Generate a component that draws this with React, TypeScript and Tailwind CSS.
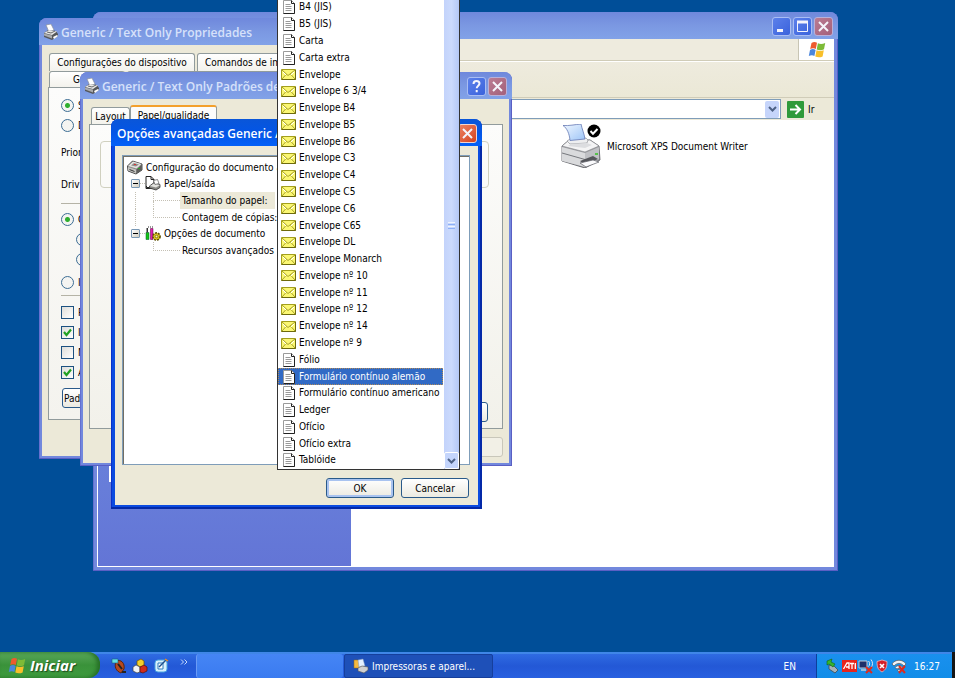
import { type FC, type ReactNode, useState } from "react"
import clsx from "clsx"

interface WindowProps {
  title?: string
  active?: boolean
  icon?: ReactNode
  controls?: ReactNode
  className?: string
  children: ReactNode
}

const SmallPrinter: FC<{ className?: string }> = ({ className = "h-4 w-4" }) => (
  <svg viewBox="0 0 16 16" className={clsx("shrink-0", className)} aria-hidden="true">
    <path d="M3 1l5-1 3 6-5 2z" fill="#fff" stroke="#8a8f9c" strokeWidth=".7" />
    <path d="M1 9l4-3 8 1 2 3v2l-6 4-8-3z" fill="#55575a" />
    <path d="M1 9l5-3 8 1.500-5 3.500z" fill="#e8e8e8" />
    <path d="M1 9.500l8 2v3l-8-3z" fill="#a9abae" />
    <path d="M4 8l4 1 4-2" stroke="#444" strokeWidth=".8" fill="none" />
    <path d="M10 13l4-2 1 1-4 3z" fill="#fff" />
  </svg>
)

const GreyPrinter: FC = () => (
  <svg viewBox="0 0 16 16" className="h-4 w-4 shrink-0" aria-hidden="true">
    <path d="M.5 7l5-5 9.500 3v6l-6 4-8-3z" fill="#8b8b88" stroke="#3c3c3c" strokeWidth=".9" />
    <path d="M1 7l5-4.500 8.500 2.500-5 4.500z" fill="#e4e4e0" />
    <path d="M4 6.500l3-2.500 5 1.500-3 2z" fill="#8f8f8c" />
    <path d="M1 8l8 2.500v4L1 11.500z" fill="#c4c4c0" />
    <path d="M2.500 10.500l5 2" stroke="#333" strokeWidth="1" />
    <path d="M9.500 10.500l5-4.500v5l-5 3.500z" fill="#5d5d5a" />
    <rect x="7" y="5" width="2" height="1" fill="#d33" />
    <rect x="11" y="9" width="2" height="1" fill="#2a2" />
  </svg>
)

const PaperTray: FC = () => (
  <svg viewBox="0 0 16 16" className="h-4 w-4 shrink-0" aria-hidden="true">
    <path d="M1 1.500h5l3 3v9H1z" fill="#fff" stroke="#222" />
    <path d="M6 1.500v3h3" fill="none" stroke="#222" />
    <path d="M4.500 11l4-3 6.500 1.500v3l-4 2.500-6.500-2z" fill="#8c8c88" stroke="#333" strokeWidth=".8" />
    <path d="M5 11l4-2.500L15 10l-4 2.500z" fill="#e2e2de" />
    <path d="M8.500 5.500l4-1 1.500 4-4 1z" fill="#fff" stroke="#555" strokeWidth=".7" />
    <path d="M4 12.500H1.500V11" stroke="#222" fill="none" />
  </svg>
)

const OptionsIcon: FC = () => (
  <svg viewBox="0 0 16 16" className="h-4 w-4 shrink-0" aria-hidden="true">
    <path d="M1 6.500h3v7H1z" fill="#14c414" stroke="#053" strokeWidth=".5" />
    <path d="M1.500 2h1.500v4.500H1.500z" fill="#333" />
    <path d="M5.500 2.500h2.500v11H5.500z" fill="#e01bb0" stroke="#503" strokeWidth=".5" />
    <path d="M3 1h5" stroke="#333" strokeDasharray="1 1" />
    <circle cx="11.500" cy="10.500" r="3.600" fill="#e0c81e" stroke="#5d5004" strokeWidth="1.600" strokeDasharray="2 1" />
    <circle cx="11.500" cy="10.500" r="1.300" fill="#fff6b0" stroke="#4d4203" strokeWidth=".6" />
  </svg>
)

const PageIcon: FC = () => (
  <svg viewBox="0 0 13 14" className="h-[14px] w-[13px] shrink-0" aria-hidden="true">
    <path d="M.5.5h8l3 3v10H.5z" fill="#fff" stroke="#9a9a9a" />
    <path d="M8.500.5v3h3v10H.5" fill="none" stroke="#222" />
    <path d="M2.500 4.500h5M2.500 6.500h6M2.500 8.500h6M2.500 10.500h6" stroke="#9a9a9a" />
  </svg>
)

const EnvelopeIcon: FC = () => (
  <svg viewBox="0 0 15 11" className="h-[11px] w-[15px] shrink-0" aria-hidden="true">
    <path d="M.5.5h14v10H.5z" fill="#fbf773" stroke="#a39f1d" />
    <path d="M1 1l6 5.500L14 1M1 10l4.500-5M14 10L9.500 5" fill="none" stroke="#a8a228" />
    <path d="M2 3l3 3M13 3l-3 3" stroke="#fff" />
    <path d="M.5 10.500h14V1" fill="none" stroke="#6e6a0c" />
  </svg>
)

const WindowsFlag: FC<{ className?: string }> = ({ className }) => (
  <svg viewBox="0 0 18 17" className={className} aria-hidden="true">
    <path d="M3.500 2C5.500.6 7.500.8 9 1.800L7.800 8C6 7 4.200 7 2.200 8z" fill="#ee5b2e" />
    <path d="M9.900 2.200c2 1 4.500 1 7.300-.2L16 8.200c-2.300 1.200-5 1.200-7.300.2z" fill="#7dbb37" />
    <path d="M2 8.900c2-1.100 4-1 5.600 0L6.400 15c-1.600-1-3.500-1-5.600 0z" fill="#4b86dd" />
    <path d="M8.500 9.300c2.200 1 4.800 1 7.300 0l-1.200 6.100c-2.300 1.200-5 1.200-7.300.1z" fill="#f8bf2a" />
  </svg>
)

const BigPrinter: FC = () => (
  <svg viewBox="0 0 42 44" className="h-[44px] w-[42px] shrink-0" aria-hidden="true">
    <defs>
      <linearGradient id="sheet" x1="0" y1="0" x2="1" y2="1">
        <stop offset="0" stopColor="#f2f8ff" />
        <stop offset="1" stopColor="#9cc4f7" />
      </linearGradient>
    </defs>
    <path d="M2 22l6-5 22-1 9 6 1 14-15 8L2 37z" fill="#9a9b9f" stroke="#55575d" strokeWidth=".8" />
    <path d="M2 22l6-5 22-1 9 6-14 6z" fill="#f4f4f5" stroke="#85878c" strokeWidth=".6" />
    <path d="M7 17l3-2 16-1 2 2-1 3-17 1z" fill="#eeeff1" stroke="#85878c" strokeWidth=".6" />
    <path d="M3 1.500c6 .5 12-1 18-1.500 1 5 3 9 4 15L10 16.500C9.500 10 7 4 3 1.500z" fill="url(#sheet)" stroke="#6478b4" strokeWidth=".8" />
    <path d="M8 22l3-2 16-1 5 2-7 3z" fill="#dcdde0" />
    <path d="M2 23l23 6v14L2 37z" fill="#d9dadc" />
    <path d="M2 29l23 6.500 14-7" stroke="#77797e" fill="none" strokeWidth="1" />
    <path d="M25 29l14-6v12l-14 8z" fill="#c3c4c8" fillOpacity=".9" />
    <path d="M20 37l13-5 5 3-13 6z" fill="#55565b" />
    <path d="M20 39l13-3 6 2-13 5z" fill="#fbfbfd" stroke="#606268" strokeWidth=".7" />
    <rect x="35" y="29" width="3" height="2" fill="#55c24a" />
    <circle cx="34" cy="7" r="6.500" fill="#000" />
    <path d="M30.500 7l2.500 2.800L37.500 5" stroke="#fff" strokeWidth="2" fill="none" />
  </svg>
)

const TitleButton: FC<{ label: string; tone: "blue" | "dim" | "red"; children: ReactNode }> = ({
  label,
  tone,
  children,
}) => (
  <button
    type="button"
    aria-label={label}
    className={clsx(
      "flex h-[19px] w-[19px] items-center justify-center rounded-[3px] border",
      tone === "blue" && "border-[#a9bdf3] bg-linear-to-br from-[#5c80ea] to-[#3a62dc]",
      tone === "dim" && "border-[#b9b0d8] bg-linear-to-br from-[#bb7c93] to-[#a3607a]",
      tone === "red" && "border-[#f3d5cf] bg-linear-to-br from-[#ec8263] to-[#d3401b]",
    )}
  >
    <svg viewBox="0 0 17 17" className="h-[17px] w-[17px]" fill="none" stroke="#f4f4fb" strokeWidth="2">
      {children}
    </svg>
  </button>
)

const cross = <path d="M4 4l9 9M13 4l-9 9" />
const question = (
  <path d="M5.500 6c0-2 1.200-3 3-3s3 1 3 2.600c0 2-2.800 2.200-2.800 4.700M8.700 12v2.200" />
)

const DesktopWindow: FC<WindowProps> = ({ title, active, icon, controls, className, children }) => (
  <section
    aria-label={title}
    className={clsx(
      "absolute flex flex-col rounded-t-lg",
      active || !title ? "px-1 pb-1" : "px-[3px] pb-[3px]",
      active
        ? "bg-[#0b4be0] shadow-[inset_-2px_-2px_0_#0429a8,inset_1px_0_0_#0a31c8]"
        : "bg-[#7288dd] shadow-[inset_-1px_-1px_0_#5a5fc4,inset_1px_0_0_#6570cf]",
      className,
    )}
  >
    <header
      className={clsx(
        "flex h-[27px] shrink-0 items-center rounded-t-lg pr-[5px] pl-1",
        active || !title ? "-mx-1" : "-mx-[3px]",
        active
          ? "bg-linear-to-b from-[#0a56d8] via-[#0355e6] to-[#0461f8]"
          : "bg-linear-to-b from-[#6f88dc] via-[#7b98e2] to-[#82a2e8]",
      )}
    >
      {icon}
      {title && (
        <h2
          className={clsx(
            "ml-[2px] grow pt-[3px] font-['Open_Sans',sans-serif] text-[12px] font-semibold whitespace-nowrap",
            active ? "text-white" : "text-[#d6e1fa]",
          )}
        >
          {title}
        </h2>
      )}
      <div className="ml-auto flex gap-[2px] pt-[2px]">{controls}</div>
    </header>
    {children}
  </section>
)

const Radio: FC<{ name: string; label: string; checked?: boolean; className?: string }> = ({
  name,
  label,
  checked,
  className,
}) => (
  <label className={clsx("flex h-[20px] items-center gap-1 whitespace-nowrap", className)}>
    <input
      type="radio"
      name={name}
      defaultChecked={checked}
      className="h-[13px] w-[13px] shrink-0 appearance-none rounded-full border border-[#3c6d94] bg-[#f4f4f1] checked:bg-[radial-gradient(circle,#2fae2f_0,#2fae2f_2px,#f4f4f1_3px)]"
    />
    {label}
  </label>
)

const Check: FC<{ label: string; checked?: boolean }> = ({ label, checked }) => (
  <label className="relative flex h-[20px] items-center gap-1 whitespace-nowrap">
    <input
      type="checkbox"
      defaultChecked={checked}
      className="peer h-[13px] w-[13px] shrink-0 appearance-none border border-[#1c5180] bg-linear-to-br from-[#dededa] to-white"
    />
    <svg viewBox="0 0 13 13" className="absolute left-0 hidden h-[13px] w-[13px] peer-checked:block">
      <path d="M3 6l2.500 3L10 3.500" fill="none" stroke="#21a121" strokeWidth="2.200" />
    </svg>
    {label}
  </label>
)

const PushButton: FC<{ children?: ReactNode; primary?: boolean; disabled?: boolean; label?: string; className?: string }> = ({
  children,
  primary,
  disabled,
  label,
  className,
}) => (
  <button
    type="button"
    aria-label={label}
    disabled={disabled}
    className={clsx(
      "h-[20px] rounded-[3px] border whitespace-nowrap",
      disabled ? "border-[#c9c7ba] bg-[#f2f0e6]" : "border-[#2a5a8a] bg-linear-to-b from-white to-[#eceae1]",
      primary && "shadow-[inset_0_0_0_2px_#a9c3f0]",
      className,
    )}
  >
    {children}
  </button>
)

const tabClass = "rounded-t-[3px] border border-b-0 border-[#919b9c] bg-linear-to-b from-white to-[#f3f2ec] whitespace-nowrap"

const PrinterProperties: FC = () => (
  <DesktopWindow
    title="Generic / Text Only Propriedades"
    icon={<SmallPrinter />}
    className="top-[18px] left-[39px] h-[441px] w-[416px]"
  >
    <div className="flex grow flex-col bg-[#ece9d8] px-[6px] pt-2 pb-[36px]">
      <div role="tablist" className="flex gap-[2px] pl-px">
        <button type="button" role="tab" className={clsx(tabClass, "h-[18px] w-[146px]")}>
          Configurações do dispositivo
        </button>
        <button type="button" role="tab" className={clsx(tabClass, "h-[18px] grow px-[7px] text-left")}>
          Comandos de im
        </button>
      </div>
      <div role="tablist" className="flex gap-[2px] pl-px">
        <button type="button" role="tab" className={clsx(tabClass, "h-[16px] w-[76px] pl-[23px] text-left leading-[14px]")}>
          G
        </button>
        <button type="button" role="tab" aria-label="Compartilhamento" className={clsx(tabClass, "h-[16px] grow")} />
      </div>
      <form className="flex grow flex-col items-start border border-[#919b9c] bg-linear-to-b from-[#fcfcfb] to-[#f4f3ee] px-3 pt-[7px]">
        <Radio name="hours" label="S" checked />
        <Radio name="hours" label="D" />
        <p className="mt-2 h-[20px] leading-[20px]">Prior</p>
        <p className="mt-3 h-[20px] leading-[20px]">Driv</p>
        <hr className="mt-2 mb-[5px] w-full border-[#b5b3a6]" />
        <Radio name="spool" label="C" checked />
        <Radio name="start" label="C" className="ml-[15px]" />
        <Radio name="start" label="C" className="ml-[15px]" />
        <Radio name="spool" label="I" className="mt-[3px]" />
        <hr className="mt-[3px] mb-[6px] w-full border-[#b5b3a6]" />
        <Check label="R" />
        <Check label="I" checked />
        <Check label="M" />
        <Check label="A" checked />
        <PushButton className="mt-[6px] ml-px pr-8 pl-px">Pad</PushButton>
      </form>
    </div>
  </DesktopWindow>
)

const PrintDefaults: FC = () => (
  <DesktopWindow
    title="Generic / Text Only Padrões de"
    icon={<SmallPrinter />}
    className="top-[72px] left-[80px] h-[394px] w-[432px]"
    controls={
      <>
        <TitleButton label="Ajuda" tone="blue">{question}</TitleButton>
        <TitleButton label="Fechar" tone="dim">{cross}</TitleButton>
      </>
    }
  >
    <div className="flex grow flex-col bg-[#ece9d8] px-[6px] pt-[6px] pb-[6px]">
      <div role="tablist" className="flex items-end">
        <button type="button" role="tab" className={clsx(tabClass, "ml-[2px] h-[17px] w-[39px]")}>
          Layout
        </button>
        <button
          type="button"
          role="tab"
          aria-selected="true"
          className="h-[19px] w-[87px] rounded-t-[3px] border-x border-t-2 border-x-[#919b9c] border-t-[#f3a02c] bg-[#fcfcfb] leading-[15px]"
        >
          Papel/qualidade
        </button>
      </div>
      <div className="flex grow flex-col border border-[#919b9c] bg-linear-to-b from-[#fcfcfb] to-[#f2f1ea] px-[10px] pt-4 pb-[6px]">
        <fieldset className="mr-[3px] h-[47px] rounded-[4px] border border-[#d0d0bf]" />
        <PushButton label="Avançado" className="mt-auto mr-1 w-[75px] self-end" />
      </div>
      <PushButton label="Aplicar" disabled className="mt-2 w-[75px] self-end" />
    </div>
  </DesktopWindow>
)

const TreeRow: FC<{ children: ReactNode }> = ({ children }) => (
  <li className="flex flex-1 items-center whitespace-nowrap">{children}</li>
)

const Branch: FC<{ icon: ReactNode; children: ReactNode }> = ({ icon, children }) => (
  <>
    <button
      type="button"
      aria-label="Recolher"
      className="ml-1 flex h-[9px] w-[9px] shrink-0 items-center justify-center rounded-[1px] border border-[#7898b5] bg-linear-to-br from-white to-[#d0ccbe]"
    >
      <span className="h-px w-[5px] bg-black" />
    </button>
    <span className="w-[5px] shrink-0 border-t border-dotted border-[#c4c0b4]" />
    {icon}
    <span className="ml-[3px]">{children}</span>
  </>
)

const Leaf: FC<{ children: ReactNode; selected?: boolean; last?: boolean; more?: boolean }> = ({
  children,
  selected,
  last,
  more,
}) => (
  <>
    <span
      className={clsx(
        "ml-2 w-[18px] shrink-0 self-stretch border-l border-dotted",
        last ? "border-transparent" : "border-[#c4c0b4]",
      )}
    />
    <span className="flex w-[27px] shrink-0 flex-col self-stretch">
      <span className="flex-1 border-b border-l border-dotted border-[#c4c0b4]" />
      <span className={clsx("flex-1 border-l border-dotted", more ? "border-[#c4c0b4]" : "border-transparent")} />
    </span>
    <span className={clsx("pr-2 pl-[2px] leading-[17px]", selected && "bg-[#ece9d8]")}>{children}</span>
  </>
)

const AdvancedOptions: FC = () => (
  <DesktopWindow
    title="Opções avançadas Generic /"
    active
    className="top-[119px] left-[111px] h-[390px] w-[371px]"
    controls={<TitleButton label="Fechar" tone="red">{cross}</TitleButton>}
  >
    <div className="flex grow flex-col bg-[#ece9d8] pt-[9px] pr-2 pb-[7px] pl-[7px]">
      <div className="grow border border-[#7f9db9] bg-white pt-[3px] pl-1 shadow-[inset_1px_1px_0_#716f64]">
        <ul className="flex h-[100px] flex-col">
          <TreeRow>
            <GreyPrinter />
            <span className="ml-[3px]">Configuração do documento a</span>
          </TreeRow>
          <TreeRow>
            <Branch icon={<PaperTray />}>Papel/saída</Branch>
          </TreeRow>
          <TreeRow>
            <Leaf selected more>Tamanho do papel:</Leaf>
          </TreeRow>
          <TreeRow>
            <Leaf>Contagem de cópias:</Leaf>
          </TreeRow>
          <TreeRow>
            <Branch icon={<OptionsIcon />}>Opções de documento</Branch>
          </TreeRow>
          <TreeRow>
            <Leaf last>Recursos avançados</Leaf>
          </TreeRow>
        </ul>
      </div>
      <div className="mt-[13px] mr-px flex justify-end gap-[7px]">
        <PushButton primary className="w-[68px]">OK</PushButton>
        <PushButton className="w-[68px]">Cancelar</PushButton>
      </div>
    </div>
  </DesktopWindow>
)

const papers = [
  "B4 (JIS)",
  "B5 (JIS)",
  "Carta",
  "Carta extra",
  "Envelope",
  "Envelope 6 3/4",
  "Envelope B4",
  "Envelope B5",
  "Envelope B6",
  "Envelope C3",
  "Envelope C4",
  "Envelope C5",
  "Envelope C6",
  "Envelope C65",
  "Envelope DL",
  "Envelope Monarch",
  "Envelope nº 10",
  "Envelope nº 11",
  "Envelope nº 12",
  "Envelope nº 14",
  "Envelope nº 9",
  "Fólio",
  "Formulário contínuo alemão",
  "Formulário contínuo americano",
  "Ledger",
  "Ofício",
  "Ofício extra",
  "Tablóide",
]

const PaperList: FC = () => {
  const [selected, setSelected] = useState("Formulário contínuo alemão")

  return (
    <div className="absolute -top-[2px] left-[277px] flex h-[472px] w-[183px] border border-[#333] bg-white">
      <ul role="listbox" aria-label="Tamanho do papel" className="flex grow flex-col">
        {papers.map((paper) => (
          <li
            key={paper}
            role="option"
            aria-selected={paper === selected}
            onClick={() => setSelected(paper)}
            className={clsx(
              "mr-px flex flex-1 items-center pl-[3px] leading-[16px] whitespace-nowrap",
              paper === selected && "bg-[#316ac5] text-white outline-1 -outline-offset-1 outline-dotted outline-[#b08a5a]",
            )}
          >
            <span className="flex w-[18px] shrink-0">
              {paper.startsWith("Envelope") ? <EnvelopeIcon /> : <span className="ml-[2px]"><PageIcon /></span>}
            </span>
            {paper}
          </li>
        ))}
      </ul>
      <div className="flex w-[15px] shrink-0 flex-col items-center justify-between bg-linear-to-r from-[#c3d3fb] via-[#cbdafd] to-[#b4c8f6]">
        <span />
        <div className="flex flex-col gap-px">
          <span className="h-px w-[7px] bg-[#eef4fe]" />
          <span className="h-px w-[7px] bg-[#8cb0f8]" />
          <span className="h-px w-[7px] bg-[#eef4fe]" />
          <span className="h-px w-[7px] bg-[#8cb0f8]" />
        </div>
        <button
          type="button"
          aria-label="Rolar para baixo"
          className="flex h-[17px] w-[15px] items-center justify-center rounded-[2px] border border-white bg-[#c4d5fc]"
        >
          <svg viewBox="0 0 9 6" className="h-[6px] w-[9px]">
            <path d="M1 1l3.500 3.500L8 1" fill="none" stroke="#4d6185" strokeWidth="2" />
          </svg>
        </button>
      </div>
    </div>
  )
}

const Explorer: FC = () => (
  <DesktopWindow
    className="top-[12px] left-[93px] h-[559px] w-[745px]"
    controls={
      <>
        <TitleButton label="Minimizar" tone="blue">
          <path d="M4 12.500h6" strokeWidth="3" />
        </TitleButton>
        <TitleButton label="Maximizar" tone="blue">
          <path d="M3.500 4v9.500h10V4" strokeWidth="1" />
          <path d="M3 4h11" strokeWidth="3" />
        </TitleButton>
        <TitleButton label="Fechar" tone="dim">{cross}</TitleButton>
      </>
    }
  >
    <div className="flex h-[22px] shrink-0 justify-end border-b border-[#d0ccb8] bg-[#eeebde]">
      <span className="flex w-[36px] items-center justify-center border-l border-[#c8c5b4] bg-white">
        <WindowsFlag className="h-[17px] w-[18px]" />
      </span>
    </div>
    <div className="h-[37px] shrink-0 border-t border-b border-t-white border-b-[#d0ccb8] bg-linear-to-b from-[#eeebde] to-[#ebe8d6]" />
    <div className="flex h-[22px] shrink-0 items-center bg-[#ece9d8]">
      <div className="flex h-[20px] grow items-center border border-[#7f9db9] bg-white pr-px">
        <input aria-label="Endereço" className="h-full min-w-0 grow bg-transparent px-1 outline-none" />
        <button
          type="button"
          aria-label="Mostrar endereços"
          className="flex h-[17px] w-[14px] items-center justify-center rounded-[2px] bg-[#c6d5fb]"
        >
          <svg viewBox="0 0 9 6" className="h-[6px] w-[9px]">
            <path d="M1 1l3.500 3.500L8 1" fill="none" stroke="#4d6185" strokeWidth="2" />
          </svg>
        </button>
      </div>
      <button type="button" className="flex w-[53px] items-center gap-1 pl-[6px]">
        <svg viewBox="0 0 17 17" className="h-[17px] w-[17px]">
          <rect width="17" height="17" rx="1" fill="#2f9a3a" />
          <path d="M3 8.500h10M8.500 4l4.500 4.500L8.500 13" fill="none" stroke="#fff" strokeWidth="2" />
        </svg>
        Ir
      </button>
    </div>
    <div className="flex grow border-b border-white">
      <aside className="w-[254px] shrink-0 border-l border-white bg-linear-to-b from-[#7ba2e7] to-[#6375d6] px-[11px]">
        <div className="h-[362px] bg-white" />
      </aside>
      <main className="grow bg-white pt-1 pl-[209px]">
        <a href="#printer" className="flex items-center gap-[5px]">
          <BigPrinter />
          Microsoft XPS Document Writer
        </a>
      </main>
    </div>
  </DesktopWindow>
)

const Taskbar: FC = () => (
  <footer className="relative flex h-[26px] shrink-0 items-stretch border-t-2 border-[#3f86e8] bg-linear-to-b from-[#2f6be2] via-[#2358d6] to-[#2860e0] text-white">
    <button
      type="button"
      className="-mt-[2px] flex w-[100px] items-center gap-1 rounded-r-xl bg-linear-to-b from-[#5aa85a] via-[#3a923a] to-[#3f9c3f] pl-2 font-['Open_Sans',sans-serif] text-[15px] font-bold italic shadow-[inset_-3px_0_4px_#256e25] text-shadow-[1px_1px_1px_#1d4d1d]"
    >
      <WindowsFlag className="h-[17px] w-[18px]" />
      Iniciar
    </button>
    <nav aria-label="Inicialização rápida" className="flex w-[95px] items-center gap-[5px] pl-[11px]">
      <a href="#tools" aria-label="Ferramentas">
        <svg viewBox="0 0 16 16" className="h-4 w-4">
          <path d="M5 3c5-2 9 2 8 8l-3 4C5 13 3 9 5 3z" fill="#b5491f" stroke="#5d230c" />
          <path d="M1 1h6v4H1z" fill="#62dfe6" stroke="#1d5a7c" strokeWidth=".6" />
          <path d="M7 6l4 5" stroke="#222" strokeWidth="2" />
          <path d="M11 13h4v2h-4z" fill="#222" />
        </svg>
      </a>
      <a href="#blocks" aria-label="Blocos">
        <svg viewBox="0 0 16 16" className="h-4 w-4">
          <path d="M5 3l4-2 3 2v5L8 9 5 7z" fill="#f2cf2d" stroke="#6c5206" strokeWidth=".7" />
          <path d="M1 9l3-2 4 2v5l-3 1-4-2z" fill="#f1f3f7" stroke="#444" strokeWidth=".7" />
          <path d="M8 9l4-2 3 2v4l-4 2-3-1z" fill="#cf2b1c" stroke="#561008" strokeWidth=".7" />
        </svg>
      </a>
      <a href="#desktop" aria-label="Mostrar área de trabalho">
        <svg viewBox="0 0 16 16" className="h-4 w-4">
          <rect x="2" y="2" width="12" height="12" rx="3" fill="#d8f0fc" stroke="#4aa4e0" />
          <path d="M5 5h5v6H5z" fill="#fff" stroke="#2b7bbd" />
          <path d="M6 9l7-7" stroke="#1e4f8c" strokeWidth="1.500" />
          <path d="M12 1l3 2" stroke="#eb8a22" strokeWidth="1.500" />
        </svg>
      </a>
      <svg viewBox="0 0 8 6" className="mb-[8px] ml-[6px] h-[6px] w-2 shrink-0" fill="none" stroke="#c5d8fb">
        <path d="M1 .5L3.500 3 1 5.500M4.500.5L7 3 4.500 5.500" />
      </svg>
    </nav>
    <div className="ml-px w-[147px] rounded-[3px] border-l border-[#6a9bf6] bg-linear-to-b from-[#4585f5] to-[#3a7bf0]" />
    <button
      type="button"
      className="ml-px flex w-[149px] items-center gap-[3px] rounded-[2px] border border-[#163f9c] bg-[#1e50b8] pl-2 whitespace-nowrap"
    >
      <svg viewBox="0 0 16 16" className="h-4 w-4 shrink-0">
        <path d="M1 2h4l1 1h4v7H1z" fill="#f4b942" stroke="#9b6b12" strokeWidth=".5" />
        <path d="M5 2l5-1 2 7-6 1z" fill="#e3f0ff" stroke="#7a94bf" strokeWidth=".5" />
        <path d="M5 10l4-2 6 1v3l-4 3-6-2z" fill="#d0d0d0" stroke="#555" strokeWidth=".6" />
      </svg>
      Impressoras e aparel...
    </button>
    <span className="ml-auto flex items-center pr-[20px]">EN</span>
    <div className="flex w-[136px] items-center border-l border-[#0d3f9c] bg-linear-to-b from-[#1990ee] to-[#128de8] pl-2">
      <svg viewBox="0 0 16 16" className="h-4 w-4 shrink-0">
        <path d="M4 7l5 1 4 4-3 3-6-4z" fill="#a9b2b8" stroke="#3e4a52" strokeWidth=".8" />
        <path d="M2 3l5-2-1 3 4 2-2 3-4-3-2 1z" fill="#35b52f" stroke="#13650f" strokeWidth=".6" />
      </svg>
      <svg viewBox="0 0 15 12" className="ml-px h-3 w-[15px] shrink-0">
        <rect width="15" height="12" fill="#e8241b" />
        <path d="M1.500 9l3.500-6h2v6M8 3.500h4M10 3.500V9M13.300 3v6M4 7h3" fill="none" stroke="#fff" strokeWidth="1.300" />
      </svg>
      <svg viewBox="0 0 16 16" className="ml-px h-4 w-4 shrink-0">
        <path d="M1 3h8v7H1z" fill="#1d2f6a" stroke="#c4ccd8" />
        <path d="M3 12h5" stroke="#c4ccd8" strokeWidth="1.500" />
        <path d="M10.500 3c1.500 1.500 1.500 4 0 5.500M13 1.500c2 2.500 2 6 0 8" fill="none" stroke="#dfe6f2" />
        <path d="M8 9l6 6M14 9l-6 6" stroke="#e02a1c" strokeWidth="2" />
      </svg>
      <svg viewBox="0 0 16 16" className="h-4 w-4 shrink-0">
        <path d="M8 2l5 1.500c0 6-1 8-5 10.500-4-2.500-5-4.500-5-10.500z" fill="#d3212a" stroke="#efb9bc" strokeWidth=".8" />
        <path d="M6 6l4 4M10 6l-4 4" stroke="#fff" strokeWidth="1.600" />
      </svg>
      <svg viewBox="0 0 18 16" className="h-4 w-[18px] shrink-0">
        <path d="M2 6c3-5 11-5 14 0l-2 2c-3-3.500-7-3.500-10 0z" fill="#eef1f5" stroke="#555" strokeWidth=".7" />
        <path d="M5 9.500c2-2.500 6-2.500 8 0l-2 1.500c-1-1-3-1-4 0zM7.500 12.500L9 11.500l1.500 1L9 14z" fill="#eef1f5" stroke="#555" strokeWidth=".7" />
        <path d="M9 8l6 7M15 8l-6 7" stroke="#e02a1c" strokeWidth="2" />
      </svg>
      <time className="ml-[6px]">16:27</time>
    </div>
    <span className="-mt-[2px] w-[3px] shrink-0 bg-[#151515]" />
  </footer>
)

export default function App() {
  return (
    <div className="flex h-screen w-full flex-col overflow-hidden bg-[#004e98] font-['DejaVu_Sans_Condensed','DejaVu_Sans',sans-serif] text-[10px] text-black">
      <div className="relative min-h-0 grow">
        <Explorer />
        <PrinterProperties />
        <PrintDefaults />
        <AdvancedOptions />
        <PaperList />
      </div>
      <Taskbar />
    </div>
  )
}
